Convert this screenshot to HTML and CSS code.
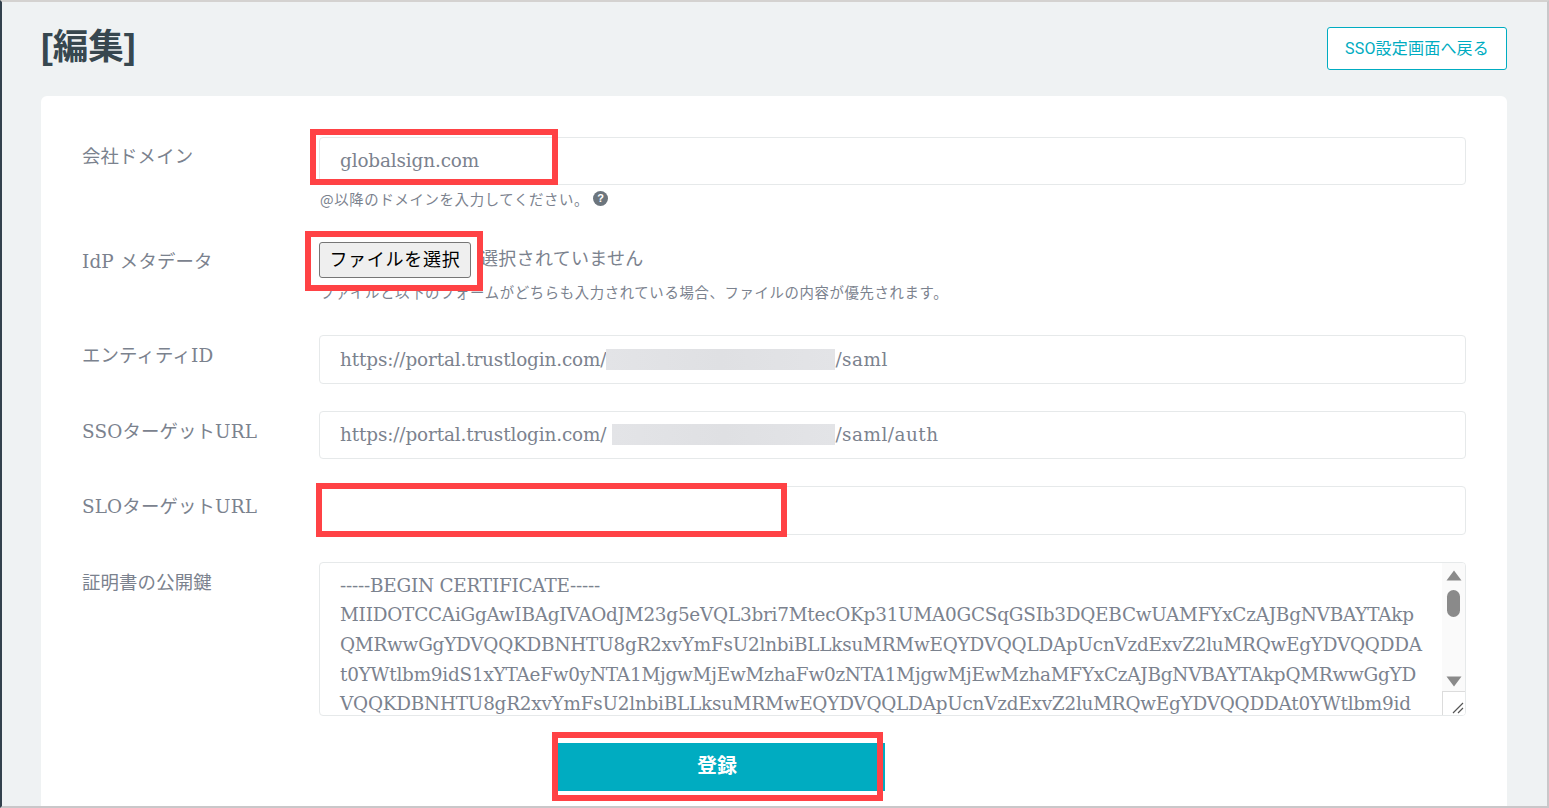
FILE: index.html
```html
<!DOCTYPE html>
<html lang="ja">
<head>
<meta charset="utf-8">
<title>編集</title>
<link rel="stylesheet" href="styles.css">
</head>
<body>
<div class="frame">
  <header class="head">
    <h1 class="title">[編集]</h1>
    <a class="back" href="#">SSO設定画面へ戻る</a>
  </header>
  <main class="card">
    <div class="row row-domain">
      <label class="label label-domain">会社ドメイン</label>
      <div>
        <div class="field field-domain">globalsign.com</div>
        <p class="help">@以降のドメインを入力してください。<span class="q">?</span></p>
      </div>
    </div>
    <div class="row row-file">
      <label class="label">IdP メタデータ</label>
      <div>
        <div class="file"><button class="pick" type="button">ファイルを選択</button><span class="none">選択されていません</span></div>
        <p class="help help-file">ファイルと以下のフォームがどちらも入力されている場合、ファイルの内容が優先されます。</p>
      </div>
    </div>
    <div class="row">
      <label class="label">エンティティID</label>
      <div class="field">https://portal.trustlogin.com/<span class="blur blur-a"></span><span class="tail">/saml</span></div>
    </div>
    <div class="row">
      <label class="label">SSOターゲットURL</label>
      <div class="field field-short">https://portal.trustlogin.com/<span class="blur blur-b"></span><span class="tail">/saml/auth</span></div>
    </div>
    <div class="row">
      <label class="label">SLOターゲットURL</label>
      <div class="field"></div>
    </div>
    <div class="row">
      <label class="label">証明書の公開鍵</label>
      <div class="area">
        <pre class="cert">-----BEGIN CERTIFICATE-----
MIIDOTCCAiGgAwIBAgIVAOdJM23g5eVQL3bri7MtecOKp31UMA0GCSqGSIb3DQEBCwUAMFYxCzAJBgNVBAYTAkp
QMRwwGgYDVQQKDBNHTU8gR2xvYmFsU2lnbiBLLksuMRMwEQYDVQQLDApUcnVzdExvZ2luMRQwEgYDVQQDDA
t0YWtlbm9idS1xYTAeFw0yNTA1MjgwMjEwMzhaFw0zNTA1MjgwMjEwMzhaMFYxCzAJBgNVBAYTAkpQMRwwGgYD
VQQKDBNHTU8gR2xvYmFsU2lnbiBLLksuMRMwEQYDVQQLDApUcnVzdExvZ2luMRQwEgYDVQQDDAt0YWtlbm9id</pre>
        <div class="bar">
          <svg class="arrow" width="16" height="11" viewBox="0 0 16 11"><path d="M8 0.5 L15.5 10.5 H0.5 Z" fill="#8a8a8a"/></svg>
          <span class="thumb"></span>
          <svg class="arrow arrow-down" width="16" height="11" viewBox="0 0 16 11"><path d="M0.5 0.5 H15.5 L8 10.5 Z" fill="#8a8a8a"/></svg>
          <span class="grip">
            <svg width="14" height="14" viewBox="0 0 14 14"><path d="M2 12 L12 2 M7 12 L12 7" stroke="#555" stroke-width="1.2" fill="none"/></svg>
          </span>
        </div>
      </div>
    </div>
    <div class="actions"><button class="submit" type="button">登録</button></div>
  </main>
  <span class="mark mark-a"></span>
  <span class="mark mark-b"></span>
  <span class="mark mark-c"></span>
  <span class="mark mark-d"></span>
</div>
</body>
</html>
```
FILE: styles.css
```css
* { box-sizing: border-box; }
html, body { margin: 0; padding: 0; overflow: hidden; }
body { background: #fff; }
.frame {
  position: relative;
  width: 1549px;
  height: 808px;
  overflow: hidden;
  background: #eff2f3;
  border-top: 2px solid #d4d2d0;
  border-right: 2px solid #c9c7c9;
  border-bottom: 2px solid #c9c7c9;
  border-left: 2px solid #33414d;
  padding: 0 40px 0 39px;
  font-family: "DejaVu Serif", "Noto Sans CJK JP", serif;
  color: #7b828e;
}
.head {
  display: flex;
  justify-content: space-between;
  align-items: flex-start;
  height: 94px;
}
.title {
  margin: 20px 0 0;
  font-family: "Liberation Sans", "Noto Sans CJK JP", sans-serif;
  font-size: 35.5px;
  line-height: 50px;
  font-weight: 700;
  color: #37474f;
}
.back {
  margin-top: 25px;
  width: 180px;
  height: 43px;
  display: flex;
  align-items: center;
  justify-content: center;
  padding-bottom: 3px;
  background: #fff;
  border: 1px solid #00acc1;
  border-radius: 3px;
  color: #00acc1;
  font-family: "Roboto", "Noto Sans CJK JP", sans-serif;
  font-size: 16px;
  letter-spacing: 0.2px;
  text-decoration: none;
}
.card {
  background: #fff;
  border-radius: 6px 6px 0 0;
  padding: 41px 41px 0;
  height: 740px;
}
.row {
  display: grid;
  grid-template-columns: 237px 1fr;
  margin-bottom: 27px;
}
.row-domain { margin-bottom: 32px; }
.row-file { margin-bottom: 33px; }
.label {
  display: block;
  padding-top: 9px;
  font-family: "DejaVu Serif", "Noto Sans CJK JP", serif;
  font-size: 18.4px;
  line-height: 24px;
  letter-spacing: 0.15px;
  color: #7b828e;
}
.label-domain { padding-top: 7.5px; }
.field {
  height: 49px;
  display: flex;
  align-items: center;
  white-space: pre;
  padding: 0 20px;
  border: 1px solid #e6e9ea;
  border-radius: 4px;
  font-size: 18.4px;
  letter-spacing: -0.13px;
  color: #7b828e;
}
.field-short { height: 48px; }
.field-domain { height: 48px; padding-bottom: 1px; }
.blur {
  display: inline-block;
  height: 21px;
  background: linear-gradient(90deg, #e3e4e7, #dfe0e3 50%, #e3e4e7);
}
.blur-a { width: 229px; }
.blur-b { width: 223px; margin-left: 6px; }
.tail { letter-spacing: 0.5px; }
.help {
  margin: 3.5px 0 0;
  padding-left: 1px;
  font-family: "Noto Sans CJK JP", sans-serif;
  font-size: 14.4px;
  line-height: 20px;
  letter-spacing: 0.65px;
  color: #7b828e;
  display: flex;
  align-items: center;
}
.help-file { letter-spacing: 0.62px; margin-top: 4px; }
.q {
  width: 15px;
  height: 15px;
  margin-left: 4px;
  border-radius: 50%;
  background: #6c757d;
  color: #fff;
  font: 700 11px/15px "Liberation Sans", sans-serif;
  text-align: center;
  letter-spacing: 0;
}
.file {
  display: flex;
  align-items: center;
  height: 36px;
  margin-top: 1px;
}
.pick {
  width: 152px;
  height: 36px;
  padding: 0 0 4px;
  background: #efefef;
  border: 1px solid #767676;
  border-radius: 3px;
  color: #000;
  font-family: "Noto Sans CJK JP", sans-serif;
  font-size: 18px;
  letter-spacing: 0.75px;
}
.none {
  margin-left: 9px;
  padding-bottom: 5px;
  font-family: "Noto Sans CJK JP", sans-serif;
  font-size: 18px;
  letter-spacing: 0.3px;
  color: #7b828e;
}
.area {
  position: relative;
  height: 154px;
  border: 1px solid #e6e9ea;
  border-radius: 4px;
  overflow: hidden;
}
.cert {
  margin: 0;
  padding: 8px 20px 0;
  font-family: "DejaVu Serif", serif;
  font-size: 18.4px;
  line-height: 29.7px;
  letter-spacing: -0.22px;
  color: #7b828e;
}
.bar {
  position: absolute;
  top: 0;
  right: 0;
  bottom: 0;
  width: 23px;
  background: #fafafa;
  display: flex;
  flex-direction: column;
  align-items: center;
  padding-top: 7px;
}
.arrow { display: block; flex: none; }
.thumb {
  display: block;
  width: 13px;
  height: 27px;
  margin-top: 9px;
  border-radius: 7px;
  background: #8a8a8a;
}
.arrow-down { margin-top: 59px; }
.grip {
  position: absolute;
  right: 0;
  bottom: 0;
  width: 23px;
  height: 24px;
  background: #fff;
  border: 1px solid #dcdcdc;
  border-right: 0;
  border-bottom: 0;
  display: flex;
  align-items: flex-end;
  justify-content: flex-end;
}
.actions {
  padding-left: 470px;
}
.submit {
  display: block;
  width: 333px;
  height: 48px;
  background: #00acc1;
  border: 0;
  border-radius: 0;
  color: #fff;
  font-family: "Noto Sans CJK JP", sans-serif;
  font-size: 20px;
  font-weight: 700;
  padding: 0 3px 4px 0;
}
.mark {
  position: absolute;
  border: 6px solid #ff4245;
}
.mark-a { left: 308px; top: 127px; width: 248px; height: 56px; }
.mark-b { left: 303px; top: 229px; width: 178px; height: 60px; }
.mark-c { left: 314px; top: 481px; width: 471px; height: 54px; }
.mark-d { left: 550px; top: 730px; width: 331px; height: 69px; }
```
